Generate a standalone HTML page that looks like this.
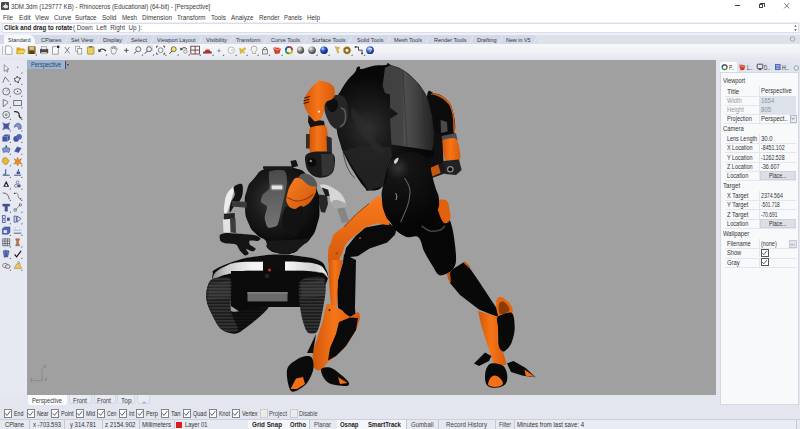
<!DOCTYPE html>
<html><head><meta charset="utf-8"><title>Rhinoceros</title>
<style>
html,body{margin:0;padding:0}
body{width:800px;height:429px;overflow:hidden;background:#fff;position:relative;font-family:"Liberation Sans",sans-serif}
.b{position:absolute}
.t{position:absolute;white-space:pre;line-height:1;transform-origin:0 50%}
svg{position:absolute;left:0;top:0}
</style></head><body>
<div class="b" style="left:0px;top:0px;width:800px;height:22px;background:#ffffff;"></div>
<div class="b" style="left:0px;top:22px;width:800px;height:13px;background:#edf0f6;"></div>
<div class="b" style="left:2px;top:23.2px;width:797px;height:9.8px;background:#ffffff;box-sizing:border-box;border:0.8px solid #d9dee9;"></div>
<div class="b" style="left:0px;top:34.5px;width:800px;height:9.2px;background:#dde1ea;"></div>
<div class="b" style="left:0px;top:35.3px;width:537px;height:8.4px;background:#d3d9e6;border-radius:0 5px 0 0;"></div>
<div class="b" style="left:0px;top:43.5px;width:800px;height:0.6px;background:#c8ceda;"></div>
<div class="b" style="left:0px;top:44px;width:800px;height:16px;background:linear-gradient(#f6f7fa,#eff1f6 55%,#e2e5ec);"></div>
<div class="b" style="left:1.5px;top:46px;width:0.6px;height:9px;background:#b9c0cf;"></div>
<div class="b" style="left:0px;top:60px;width:27px;height:336px;background:#e6e9f1;"></div>
<div class="b" style="left:27px;top:60px;width:689.4px;height:334.8px;background:#a0a0a0;"></div>
<div class="b" style="left:716.4px;top:60px;width:83.6px;height:345px;background:#e3e6ee;"></div>
<div class="b" style="left:719.7px;top:71.5px;width:79.8px;height:333.5px;background:#f8f9fb;box-sizing:border-box;border:0.8px solid #d3d8e3;"></div>
<div class="b" style="left:0px;top:394.8px;width:717px;height:10.5px;background:#e3e6ee;"></div>
<div class="b" style="left:0px;top:405px;width:800px;height:14px;background:#e3e6ee;"></div>
<div class="b" style="left:0px;top:419px;width:800px;height:10px;background:#e6e9f0;border-top:0.8px solid #c9cfdb;box-sizing:border-box;"></div>
<div class="b" style="left:1.3px;top:1.6px;width:7.8px;height:8.2px;background:#4a4a4a;border-radius:0.8px;"></div>
<div class="b" style="left:735.2px;top:5.2px;width:5.2px;height:0.7px;background:#444;"></div>
<div class="b" style="left:759.3px;top:4.2px;width:4.2px;height:4.2px;background:transparent;border:0.7px solid #444;box-sizing:border-box;"></div>
<div class="b" style="left:760.4px;top:3.1px;width:4.2px;height:4.2px;background:transparent;border-top:0.7px solid #444;border-right:0.7px solid #444;box-sizing:border-box;"></div>
<div class="b" style="left:3.5px;top:35.3px;width:31px;height:8.8px;background:#f8f9fc;border-radius:2px 6px 0 0;"></div>
<div class="b" style="left:66px;top:36px;width:0.7px;height:7.5px;background:#e4e8f1;transform:skewX(-25deg);"></div>
<div class="b" style="left:97px;top:36px;width:0.7px;height:7.5px;background:#e4e8f1;transform:skewX(-25deg);"></div>
<div class="b" style="left:126px;top:36px;width:0.7px;height:7.5px;background:#e4e8f1;transform:skewX(-25deg);"></div>
<div class="b" style="left:152px;top:36px;width:0.7px;height:7.5px;background:#e4e8f1;transform:skewX(-25deg);"></div>
<div class="b" style="left:200px;top:36px;width:0.7px;height:7.5px;background:#e4e8f1;transform:skewX(-25deg);"></div>
<div class="b" style="left:231px;top:36px;width:0.7px;height:7.5px;background:#e4e8f1;transform:skewX(-25deg);"></div>
<div class="b" style="left:265px;top:36px;width:0.7px;height:7.5px;background:#e4e8f1;transform:skewX(-25deg);"></div>
<div class="b" style="left:305px;top:36px;width:0.7px;height:7.5px;background:#e4e8f1;transform:skewX(-25deg);"></div>
<div class="b" style="left:350px;top:36px;width:0.7px;height:7.5px;background:#e4e8f1;transform:skewX(-25deg);"></div>
<div class="b" style="left:388px;top:36px;width:0.7px;height:7.5px;background:#e4e8f1;transform:skewX(-25deg);"></div>
<div class="b" style="left:427px;top:36px;width:0.7px;height:7.5px;background:#e4e8f1;transform:skewX(-25deg);"></div>
<div class="b" style="left:471px;top:36px;width:0.7px;height:7.5px;background:#e4e8f1;transform:skewX(-25deg);"></div>
<div class="b" style="left:500px;top:36px;width:0.7px;height:7.5px;background:#e4e8f1;transform:skewX(-25deg);"></div>
<div class="b" style="left:535px;top:36px;width:0.7px;height:7.5px;background:#e4e8f1;transform:skewX(-25deg);"></div>
<div class="b" style="left:27px;top:60px;width:37.8px;height:9.2px;background:#9db4d1;"></div>
<div class="b" style="left:65.1px;top:60.5px;width:0.6px;height:8.5px;background:#3a5070;"></div>
<div class="b" style="left:66.6px;top:64px;width:0;height:0;border-left:1.5px solid transparent;border-right:1.5px solid transparent;border-top:2px solid #333;"></div>
<div class="b" style="left:27.5px;top:394.8px;width:39px;height:10px;background:#fbfcfe;border-radius:0 0 3px 3px;"></div>
<div class="b" style="left:69px;top:394.8px;width:22.7px;height:9.6px;background:#e8ebf3;border-radius:0 0 3px 3px;border:0.5px solid #d3d8e4;border-top:none;box-sizing:border-box;"></div>
<div class="b" style="left:93.5px;top:394.8px;width:22px;height:9.6px;background:#e8ebf3;border-radius:0 0 3px 3px;border:0.5px solid #d3d8e4;border-top:none;box-sizing:border-box;"></div>
<div class="b" style="left:117px;top:394.8px;width:17.6px;height:9.6px;background:#e8ebf3;border-radius:0 0 3px 3px;border:0.5px solid #d3d8e4;border-top:none;box-sizing:border-box;"></div>
<div class="b" style="left:137px;top:394.8px;width:13px;height:9.6px;background:#e8ebf3;border-radius:0 0 3px 3px;border:0.5px solid #d3d8e4;border-top:none;box-sizing:border-box;"></div>
<div class="b" style="left:3.6px;top:409px;width:8.4px;height:8.7px;background:#fff;border:0.7px solid #7c8393;box-sizing:border-box;"></div>
<div class="b" style="left:26.5px;top:409px;width:8.4px;height:8.7px;background:#fff;border:0.7px solid #7c8393;box-sizing:border-box;"></div>
<div class="b" style="left:51px;top:409px;width:8.4px;height:8.7px;background:#fff;border:0.7px solid #7c8393;box-sizing:border-box;"></div>
<div class="b" style="left:75.5px;top:409px;width:8.4px;height:8.7px;background:#fff;border:0.7px solid #7c8393;box-sizing:border-box;"></div>
<div class="b" style="left:97px;top:409px;width:8.4px;height:8.7px;background:#fff;border:0.7px solid #7c8393;box-sizing:border-box;"></div>
<div class="b" style="left:118.5px;top:409px;width:8.4px;height:8.7px;background:#fff;border:0.7px solid #7c8393;box-sizing:border-box;"></div>
<div class="b" style="left:136px;top:409px;width:8.4px;height:8.7px;background:#fff;border:0.7px solid #7c8393;box-sizing:border-box;"></div>
<div class="b" style="left:160.5px;top:409px;width:8.4px;height:8.7px;background:#fff;border:0.7px solid #7c8393;box-sizing:border-box;"></div>
<div class="b" style="left:182.5px;top:409px;width:8.4px;height:8.7px;background:#fff;border:0.7px solid #7c8393;box-sizing:border-box;"></div>
<div class="b" style="left:208.5px;top:409px;width:8.4px;height:8.7px;background:#fff;border:0.7px solid #7c8393;box-sizing:border-box;"></div>
<div class="b" style="left:231.5px;top:409px;width:8.4px;height:8.7px;background:#fff;border:0.7px solid #7c8393;box-sizing:border-box;"></div>
<div class="b" style="left:259.5px;top:409px;width:8.4px;height:8.7px;background:#ebebeb;border:0.6px solid #c8ccd6;box-sizing:border-box;"></div>
<div class="b" style="left:290px;top:409px;width:8.4px;height:8.7px;background:#ebebeb;border:0.6px solid #c8ccd6;box-sizing:border-box;"></div>
<div class="b" style="left:176.3px;top:421.6px;width:6.2px;height:6.4px;background:#d81e1e;"></div>
<div class="b" style="left:28.5px;top:419.5px;width:0.6px;height:9.5px;background:#c3c9d6;"></div>
<div class="b" style="left:64px;top:419.5px;width:0.6px;height:9.5px;background:#c3c9d6;"></div>
<div class="b" style="left:101.5px;top:419.5px;width:0.6px;height:9.5px;background:#c3c9d6;"></div>
<div class="b" style="left:138.5px;top:419.5px;width:0.6px;height:9.5px;background:#c3c9d6;"></div>
<div class="b" style="left:173.5px;top:419.5px;width:0.6px;height:9.5px;background:#c3c9d6;"></div>
<div class="b" style="left:247.5px;top:419.5px;width:0.6px;height:9.5px;background:#c3c9d6;"></div>
<div class="b" style="left:285.5px;top:419.5px;width:0.6px;height:9.5px;background:#c3c9d6;"></div>
<div class="b" style="left:309px;top:419.5px;width:0.6px;height:9.5px;background:#c3c9d6;"></div>
<div class="b" style="left:336.5px;top:419.5px;width:0.6px;height:9.5px;background:#c3c9d6;"></div>
<div class="b" style="left:362.5px;top:419.5px;width:0.6px;height:9.5px;background:#c3c9d6;"></div>
<div class="b" style="left:405.5px;top:419.5px;width:0.6px;height:9.5px;background:#c3c9d6;"></div>
<div class="b" style="left:438px;top:419.5px;width:0.6px;height:9.5px;background:#c3c9d6;"></div>
<div class="b" style="left:494.5px;top:419.5px;width:0.6px;height:9.5px;background:#c3c9d6;"></div>
<div class="b" style="left:248px;top:419.5px;width:37.5px;height:9.5px;background:#f4f6fa;"></div>
<div class="b" style="left:286px;top:419.5px;width:23px;height:9.5px;background:#f4f6fa;"></div>
<div class="b" style="left:337px;top:419.5px;width:25.5px;height:9.5px;background:#f4f6fa;"></div>
<div class="b" style="left:363px;top:419.5px;width:42.5px;height:9.5px;background:#f4f6fa;"></div>
<div class="b" style="left:514px;top:420px;width:283px;height:9px;background:#e9ecf2;border-left:0.6px solid #c3c9d6;border-right:0.6px solid #c3c9d6;box-sizing:border-box;"></div>
<div class="b" style="left:720.3px;top:61.5px;width:17px;height:10.2px;background:#fbfcfe;border-radius:2px 2px 0 0;"></div>
<div class="b" style="left:738px;top:62px;width:17.2px;height:9.4px;background:#dde2ec;border-radius:2px 4px 0 0;"></div>
<div class="b" style="left:756px;top:62px;width:17.4px;height:9.4px;background:#dde2ec;border-radius:2px 4px 0 0;"></div>
<div class="b" style="left:774.2px;top:62px;width:17.4px;height:9.4px;background:#dde2ec;border-radius:2px 4px 0 0;"></div>
<div class="b" style="left:725px;top:95.6px;width:71px;height:0.5px;background:#e3e6ee;"></div>
<div class="b" style="left:758.5px;top:86.4px;width:0.5px;height:9.2px;background:#e3e6ee;"></div>
<div class="b" style="left:725px;top:104.8px;width:71px;height:0.5px;background:#e3e6ee;"></div>
<div class="b" style="left:758.5px;top:95.60000000000001px;width:0.5px;height:9.2px;background:#e3e6ee;"></div>
<div class="b" style="left:759px;top:95.8px;width:37px;height:8.8px;background:#dde1ea;"></div>
<div class="b" style="left:725px;top:114.1px;width:71px;height:0.5px;background:#e3e6ee;"></div>
<div class="b" style="left:758.5px;top:104.9px;width:0.5px;height:9.2px;background:#e3e6ee;"></div>
<div class="b" style="left:759px;top:105.1px;width:37px;height:8.8px;background:#dde1ea;"></div>
<div class="b" style="left:725px;top:123.1px;width:71px;height:0.5px;background:#e3e6ee;"></div>
<div class="b" style="left:758.5px;top:113.9px;width:0.5px;height:9.2px;background:#e3e6ee;"></div>
<div class="b" style="left:789.5px;top:114.5px;width:7px;height:8px;background:#e8ebf1;border:0.5px solid #b4bac8;box-sizing:border-box;"></div>
<div class="b" style="left:725px;top:143.0px;width:71px;height:0.5px;background:#e3e6ee;"></div>
<div class="b" style="left:758.5px;top:133.8px;width:0.5px;height:9.2px;background:#e3e6ee;"></div>
<div class="b" style="left:725px;top:152.4px;width:71px;height:0.5px;background:#e3e6ee;"></div>
<div class="b" style="left:758.5px;top:143.20000000000002px;width:0.5px;height:9.2px;background:#e3e6ee;"></div>
<div class="b" style="left:725px;top:161.7px;width:71px;height:0.5px;background:#e3e6ee;"></div>
<div class="b" style="left:758.5px;top:152.5px;width:0.5px;height:9.2px;background:#e3e6ee;"></div>
<div class="b" style="left:725px;top:171.0px;width:71px;height:0.5px;background:#e3e6ee;"></div>
<div class="b" style="left:758.5px;top:161.8px;width:0.5px;height:9.2px;background:#e3e6ee;"></div>
<div class="b" style="left:725px;top:180.2px;width:71px;height:0.5px;background:#e3e6ee;"></div>
<div class="b" style="left:758.5px;top:171.0px;width:0.5px;height:9.2px;background:#e3e6ee;"></div>
<div class="b" style="left:759.5px;top:171.4px;width:36.5px;height:8.4px;background:#dcdfe5;border:0.5px solid #ced2da;box-sizing:border-box;"></div>
<div class="b" style="left:725px;top:199.9px;width:71px;height:0.5px;background:#e3e6ee;"></div>
<div class="b" style="left:758.5px;top:190.70000000000002px;width:0.5px;height:9.2px;background:#e3e6ee;"></div>
<div class="b" style="left:725px;top:209.4px;width:71px;height:0.5px;background:#e3e6ee;"></div>
<div class="b" style="left:758.5px;top:200.20000000000002px;width:0.5px;height:9.2px;background:#e3e6ee;"></div>
<div class="b" style="left:725px;top:218.79999999999998px;width:71px;height:0.5px;background:#e3e6ee;"></div>
<div class="b" style="left:758.5px;top:209.6px;width:0.5px;height:9.2px;background:#e3e6ee;"></div>
<div class="b" style="left:725px;top:228.0px;width:71px;height:0.5px;background:#e3e6ee;"></div>
<div class="b" style="left:758.5px;top:218.8px;width:0.5px;height:9.2px;background:#e3e6ee;"></div>
<div class="b" style="left:759.5px;top:219.20000000000002px;width:36.5px;height:8.4px;background:#dcdfe5;border:0.5px solid #ced2da;box-sizing:border-box;"></div>
<div class="b" style="left:725px;top:248.1px;width:71px;height:0.5px;background:#e3e6ee;"></div>
<div class="b" style="left:758.5px;top:238.9px;width:0.5px;height:9.2px;background:#e3e6ee;"></div>
<div class="b" style="left:789px;top:239.5px;width:7.5px;height:8px;background:#e1e4ea;border:0.5px solid #c4c9d4;box-sizing:border-box;"></div>
<div class="b" style="left:725px;top:257.5px;width:71px;height:0.5px;background:#e3e6ee;"></div>
<div class="b" style="left:758.5px;top:248.3px;width:0.5px;height:9.2px;background:#e3e6ee;"></div>
<div class="b" style="left:760.5px;top:248.9px;width:8px;height:8px;background:#fff;border:0.7px solid #555;box-sizing:border-box;"></div>
<div class="b" style="left:725px;top:266.70000000000005px;width:71px;height:0.5px;background:#e3e6ee;"></div>
<div class="b" style="left:758.5px;top:257.5px;width:0.5px;height:9.2px;background:#e3e6ee;"></div>
<div class="b" style="left:760.5px;top:258.1px;width:8px;height:8px;background:#fff;border:0.7px solid #555;box-sizing:border-box;"></div>
<svg width="800" height="429" viewBox="0 0 800 429">
<defs>
<clipPath id="vp"><rect x="27" y="60" width="689.4" height="334.8"/></clipPath>
<radialGradient id="gBody" gradientUnits="userSpaceOnUse" cx="368" cy="128" r="52"><stop offset="0" stop-color="#303030"/><stop offset="0.45" stop-color="#1a1a1a"/><stop offset="1" stop-color="#080808"/></radialGradient>
<linearGradient id="gPanel" gradientUnits="userSpaceOnUse" x1="383" y1="0" x2="434" y2="0"><stop offset="0" stop-color="#404040"/><stop offset="0.38" stop-color="#434343"/><stop offset="0.42" stop-color="#4e4e4e"/><stop offset="0.62" stop-color="#444"/><stop offset="0.8" stop-color="#343434"/><stop offset="1" stop-color="#222"/></linearGradient>
<radialGradient id="gPelvis" gradientUnits="userSpaceOnUse" cx="398" cy="168" r="60"><stop offset="0" stop-color="#333"/><stop offset="0.2" stop-color="#141414"/><stop offset="1" stop-color="#050505"/></radialGradient>
<linearGradient id="gOr" x1="0" y1="0" x2="1" y2="0"><stop offset="0" stop-color="#cf560a"/><stop offset="0.45" stop-color="#f67518"/><stop offset="1" stop-color="#d65b0c"/></linearGradient>
<linearGradient id="gOrV" x1="0" y1="0" x2="0" y2="1"><stop offset="0" stop-color="#f97b1d"/><stop offset="1" stop-color="#d55a0c"/></linearGradient>
<linearGradient id="gOrD" x1="0" y1="0" x2="1" y2="1"><stop offset="0" stop-color="#fa8124"/><stop offset="1" stop-color="#cc540a"/></linearGradient>
<radialGradient id="gSmall" gradientUnits="userSpaceOnUse" cx="276" cy="200" r="44"><stop offset="0" stop-color="#3a3a3a"/><stop offset="0.55" stop-color="#1b1b1b"/><stop offset="1" stop-color="#0a0a0a"/></radialGradient>
<linearGradient id="gWhite" x1="0" y1="0" x2="1" y2="1"><stop offset="0" stop-color="#f6f6f6"/><stop offset="1" stop-color="#a4a4a4"/></linearGradient>
<linearGradient id="gTank" gradientUnits="userSpaceOnUse" x1="212" y1="0" x2="328" y2="0"><stop offset="0" stop-color="#8a8a8a"/><stop offset="0.12" stop-color="#c9c9c9"/><stop offset="0.35" stop-color="#f4f4f4"/><stop offset="0.65" stop-color="#f4f4f4"/><stop offset="0.88" stop-color="#d0d0d0"/><stop offset="1" stop-color="#eee"/></linearGradient>
<linearGradient id="gBand" x1="0" y1="0" x2="0" y2="1"><stop offset="0" stop-color="#4c4c4c"/><stop offset="0.45" stop-color="#626262"/><stop offset="1" stop-color="#787878"/></linearGradient>
<pattern id="trk" width="4" height="3.2" patternUnits="userSpaceOnUse"><rect width="4" height="3.2" fill="#191919"/><rect y="0" width="4" height="1.7" fill="#343434"/></pattern>
<pattern id="trk2" width="4" height="3.2" patternUnits="userSpaceOnUse"><rect width="4" height="3.2" fill="#0c0c0c"/><rect y="0" width="4" height="1.3" fill="#161616"/></pattern>
</defs>
<g clip-path="url(#vp)">
<g>
<path d="M212.8,274 C213.4,271.4 210.4,272.1 216,269 C221.6,265.9 227.2,263.5 237,260.5 C246.8,257.5 248.2,257.7 258,256.3 C267.8,254.9 269.2,254.5 279,254.5 C288.8,254.5 290.7,254.9 300,256.3 C309.3,257.7 312.9,257.5 319,260.5 C325.1,263.5 323.9,264.9 326,269 C328.1,273.1 328.7,277.1 328,278 C327.3,278.9 327.7,274.6 323,273 C318.3,271.4 316.9,271.7 308,271 C299.1,270.3 295.5,270.2 285,270 C274.5,269.8 272.8,269.8 263,270 C253.2,270.2 252.6,269.7 243,271 C233.4,272.3 228.9,273.4 222,275.5 C215.1,277.6 215.6,280.4 213.5,280 C211.4,279.6 212.2,276.6 212.8,274Z" fill="#0d0d0d" />
<path d="M213.5,280.5 L222,275.5 L243,271 L308,271 L323,273 L328,278 L326,284 L300,282 L231,282 L214,284Z" fill="#0b0b0b" />
<path d="M213,277 C213.6,275.2 213.9,273.7 216.5,271.5 C219.1,269.3 221.9,267.8 226,266 C230.1,264.2 230.6,263.3 237,262.5 C243.4,261.7 249.6,262 258,261.8 C266.4,261.6 270.6,261.6 279,261.6 C287.4,261.6 292.2,261.4 300,262 C307.8,262.6 313,262.8 318,264.5 C323,266.2 323,267.8 325,270.5 C327,273.2 328.4,277.5 328,278 C327.6,278.5 327,274.4 323,273 C319,271.6 315.6,271.6 308,271 C300.4,270.4 294,270.2 285,270 C276,269.8 271.4,269.8 263,270 C254.6,270.2 251.2,269.9 243,271 C234.8,272.1 227.9,273.6 222,275.5 C216.1,277.4 215.3,280.2 213.5,280.5 C211.7,280.8 212.4,278.8 213,277Z" fill="url(#gTank)" />
<path d="M263,258 L285,258 L285,271 L263,271Z" fill="#0e0e0e" />
<path d="M231,271 L301,271 L301,307 L268,307 L262,312 L240,312 L231,306Z" fill="#0b0b0b" />
<rect x="247.5" y="292" width="40" height="9.4" fill="#6b6b6b"/><rect x="247.5" y="292" width="40" height="2" fill="#7c7c7c"/>
<circle cx="269.5" cy="270" r="1.5" fill="#d82525"/><circle cx="267" cy="276" r="2.2" fill="#2c2222"/>
<path d="M206.5,292 C206.8,288.9 208.4,283.4 209.7,281.5 C211,279.6 213.2,278.3 216,278 C218.8,277.7 228.7,275 230.7,279.4 C232.7,283.8 226,307.4 231,311 C236,314.6 267.3,303.9 268.5,306.7 C269.7,309.5 245.6,328.6 240,332 C234.4,335.4 229.4,332.9 226.5,332 C223.6,331.1 220.5,329.3 218,325.6 C215.5,321.9 209.1,309.1 207.6,304.6 C206.1,300.1 206.2,295.1 206.5,292Z" fill="url(#trk2)" />
<path d="M206.5,292 C206.8,288.9 208.4,283.4 209.7,281.5 C211,279.6 213.2,278.3 216,278 C218.8,277.7 228.7,275 230.7,279.4 C232.7,283.8 230,304.3 231,311 C232,317.7 238.6,327.2 238,330 C237.4,332.8 229.2,332.6 226.5,332 C223.8,331.4 220.5,329.3 218,325.6 C215.5,321.9 209.1,309.1 207.6,304.6 C206.1,300.1 206.2,295.1 206.5,292Z" fill="url(#trk)" />
<path d="M300,281.5 C302.9,276.7 319.6,275.9 323,277.3 C326.4,278.7 325.8,286.4 325.5,292 C325.2,297.6 322.2,313.7 321,319 C319.8,324.3 318.5,330.3 316.7,332 C314.9,333.7 309.4,334.5 307.3,332 C305.2,329.5 302,319.7 301,313 C300,306.3 297.1,286.3 300,281.5Z" fill="url(#trk)" />
<path d="M209,284 L229.5,281 L230.5,298 L208,300Z" fill="#6a6a6a" opacity="0.22"/>
<path d="M301,283 L324,279.5 L325,296 L301.5,298Z" fill="#6a6a6a" opacity="0.22"/>
<path d="M264.7,169 C256.9,172.3 259.3,172.3 254,178.6 C248.7,184.9 249.7,181.6 247,190 C244.3,198.4 244.6,196.7 245,206.6 C245.4,216.5 244.9,214.6 248.4,223 C251.9,231.4 251.3,229.1 256.6,234.5 C261.9,239.9 262.6,236.8 266,241 C269.4,245.2 263.8,244.8 268,248.5 C272.2,252.2 272.2,252.3 280,253.5 C287.8,254.7 287.7,254.8 294,252.5 C300.3,250.2 296.2,250.1 301,246 C305.8,241.9 305.2,245.3 310,239 C314.8,232.7 314.1,234.7 317,225 C319.9,215.3 319.5,217.1 319.5,206.6 C319.5,196.1 320.4,199.2 317,190 C313.6,180.8 314.3,182.4 308,176 C301.7,169.6 304.4,171.1 296,168.5 C287.6,165.9 289.4,167.3 280,167.5 C270.6,167.7 272.5,165.7 264.7,169Z" fill="url(#gSmall)" />
<path d="M266,241 L310,239 L301,247 L294,253 L280,254 L268,249Z" fill="#181818" />
<rect x="263" y="166.3" width="30" height="2.6" rx="0.8" fill="#1a1a1a"/>
<path d="M290.5,161 L296,160 L298.2,166 L292,167.7Z" fill="#141414" />
<path d="M269.4,171.6 C270.9,169.8 282.7,169.4 284.5,170.5 C286.3,171.6 287.2,179.4 287,183 C286.8,186.6 282.9,202.4 282,206.6 C281.1,210.8 278.9,222.9 277.5,225 C276.1,227.1 269.3,228.2 268,227.5 C266.7,226.8 264.8,220.1 264.7,218 C264.6,215.9 267.4,208.2 267,206.6 C266.6,205 261.5,203.2 261,202 C260.5,200.8 261.6,196.4 262.4,195 C263.2,193.6 268.7,190.3 269.4,188 C270.1,185.7 267.9,173.3 269.4,171.6Z" fill="url(#gBand)" opacity="0.95"/>
<rect x="271.7" y="185.4" width="10.5" height="3.8" rx="1" fill="#f2f2f2"/>
<rect x="270.5" y="184.2" width="13" height="6.2" rx="2" fill="#cfcfcf" opacity="0.35"/>
<path d="M226.9,193.8 C228.1,191.7 230.5,189.1 231.8,187.9 C233.1,186.8 234.6,185.8 234.8,186.9 C235,188.1 233.6,191.8 232.8,194.8 C232,197.8 231,201.5 229.8,204.8 C228.7,208.1 226.9,213.7 225.9,214.7 C224.9,215.7 224.1,213 223.9,210.7 C223.7,208.4 224.4,203.6 224.9,200.8 C225.4,198 225.8,196 226.9,193.8Z" fill="#ececec" />
<path d="M233.8,186.9 C235,185.1 240.2,182.9 241.7,183.9 C243.2,184.9 243,190.1 242.7,192.9 C242.4,195.7 241.3,198.5 239.8,200.8 C238.3,203.1 235.5,204.7 233.8,206.7 C232.1,208.7 230.3,213.3 229.8,212.7 C229.3,212 230,205.8 230.8,202.8 C231.6,199.8 234.3,197.5 234.8,194.8 C235.3,192.2 232.7,188.7 233.8,186.9Z" fill="#121212" />
<path d="M231.8,200.8 L246.7,202 L246.7,207.7 L231.8,206.5Z" fill="#3a3a3a" />
<path d="M223.9,213.7 L234.8,213 L234.8,219.6 L223.9,220Z" fill="#242424" />
<path d="M222.9,219.6 L232.8,218.7 L233.4,232.5 L223.5,232.5Z" fill="#e2e2e2" />
<path d="M230,219 L235.5,218.5 L236,233 L230.5,232.5Z" fill="#3c3c3c" />
<path d="M219.9,235 C220.5,234.1 224.1,233.2 226,233 C227.9,232.8 233,233.3 235.8,233.5 C238.6,233.7 247.3,234.3 249.7,234.5 C252.1,234.7 254.7,235 256,235.5 C257.3,236 260.4,237.9 260.6,238.5 C260.8,239.1 259.2,240.8 258,241 C256.8,241.2 251,240.1 250,240.5 C249,240.9 249,243.5 249.7,244.4 C250.4,245.3 255.2,247.7 255.6,248.5 C256,249.3 254.1,251.3 253,251.4 C251.9,251.5 246.5,248.8 246,249 C245.5,249.2 248.8,252.8 248.7,253.5 C248.6,254.2 246,255.8 245,255.4 C244,255 240.9,251.7 239.8,250.4 C238.8,249.1 237.6,245.3 236,244.5 C234.4,243.7 227.8,243.9 226,243.5 C224.2,243.1 221.2,242 220.5,241 C219.8,240 219.3,235.9 219.9,235Z" fill="#141414" />
<path d="M320.5,184.8 C321.6,184.3 325.3,184.5 328.2,185.5 C331.1,186.5 335.4,189 338,191 C340.6,193 342.2,195.1 343.5,197.3 C344.8,199.5 345.7,202.4 345.6,204.3 C345.5,206.2 344.4,207.9 342.8,208.5 C341.2,209.1 337.8,208.7 335.8,207.8 C333.8,206.9 332,205 331,203 C330,201 330.3,198.1 329.6,196 C328.9,193.9 328.1,191.7 326.8,190.4 C325.5,189.1 322.9,189.2 321.9,188.3 C320.8,187.4 319.4,185.3 320.5,184.8Z" fill="#d6d6d6" />
<path d="M331,203 C330.9,201.7 333.3,200.3 335,200 C336.7,199.7 339.2,200.3 341,201 C342.8,201.7 345.3,203.1 345.6,204.3 C345.9,205.6 344.4,207.9 342.8,208.5 C341.2,209.1 337.8,208.7 335.8,207.8 C333.8,206.9 331.1,204.3 331,203Z" fill="#a8a8a8" />
<path d="M321.9,187.6 L328.2,189.7 L329.6,196 L325.4,196Z" fill="#1a1a1a" />
<path d="M319,194.6 L327,195.5 L328,204 L325,212.7 L321,212 L319,204Z" fill="#262626" />
<path d="M337.2,208.5 L344.5,207.5 L349,221 L342,223.5Z" fill="#858585" />
</g>
<g>
<path d="M427,96 C428.4,86.3 430.3,92.6 435,93.5 C439.7,94.4 442.8,95.7 447,100 C451.2,104.3 451.1,104.8 453,112 C454.9,119.2 455.7,125.2 455,131 C454.3,136.8 453.5,134.7 450,137 C446.5,139.3 444.9,141.5 440,141 C435.1,140.5 432,145.5 429,135 C426,124.5 425.6,105.7 427,96Z" fill="#0c0c0c" />
<path d="M431,94.8 C430.9,94.4 431.3,92.3 435,93.5 C438.7,94.7 442.8,95.7 447,100 C451.2,104.3 451.1,104.8 453,112 C454.9,119.2 454.9,126.3 455,131 C455.1,135.7 454.3,136.2 453.6,132 C452.9,127.8 453.8,120.1 452,113 C450.2,105.9 449.9,105.7 446,101.6 C442.1,97.5 439,96.9 435.5,95.3 C432,93.7 431.1,95.2 431,94.8Z" fill="#d85c0e" />
<path d="M440.6,120 L447,122 L447.6,131.6 L441,133Z" fill="#4a4a4a" />
<path d="M441.5,136 L456,133 L457.5,140 L442.5,143Z" fill="#4e4e4e" />
<path d="M442,142 C442.4,139 447,138.8 449,138.5 C451,138.2 455.5,137.3 457,140 C458.5,142.7 461.5,156.2 460,159 C458.5,161.8 448.4,163.3 446,161 C443.6,158.7 441.6,145 442,142Z" fill="url(#gOr)" />
<path d="M443,161 L459,159.5 L461.6,170 L456,175 L445,174Z" fill="#222" />
<circle cx="450.3" cy="169.3" r="3.3" fill="#8a8a8a"/><circle cx="450.3" cy="169.3" r="2" fill="#0c0c0c"/>
<path d="M425,163 L443,160.5 L446,173 L432,178Z" fill="#1a1a1a" />
<path d="M428,166 L438,163.5 L440.6,173 L431,177Z" fill="#c4560f" />
<path d="M430,128 L440,134 L442.5,143 L443.5,162 L430,168Z" fill="#101010" />
<path d="M400,231 C397,236.3 414,233.7 418,237 C422,240.3 421.7,246.3 424,251 C426.3,255.7 429.5,261 432,265 C434.5,269 436.3,273.7 439,275 C441.7,276.3 445.7,274 448,273 C450.3,272 451.7,271 453,269 C454.3,267 455.7,265 456,261 C456.3,257 455.7,250.7 455,245 C454.3,239.3 453.5,232.5 452,227 C450.5,221.5 448.7,215.7 446,212 C443.3,208.3 443.7,201.8 436,205 C428.3,208.2 403,225.7 400,231Z" fill="#070707" />
<path d="M453,269 L464,262 L469,267 L480,283 L499,312 L497.6,317 L479,309.6 L460,295 L450,283 L449,274Z" fill="#080808" />
<path d="M447,274 L450,272 L451,283 L448,279Z" fill="#c8540c" />
<path d="M463,262.5 L465,261.5 L470.5,267 L469,268Z" fill="#c8540c" />
<path d="M436,203 C435.6,199.2 438.7,199.8 440.5,199.5 C442.3,199.2 445.5,199.4 447,201 C448.5,202.6 449,205.8 449.5,209 C450,212.2 451.1,217.8 450,220 C448.9,222.2 445.3,224.8 443,222 C440.7,219.2 436.4,206.8 436,203Z" fill="#e0600e" />
<path d="M496.3,301 C496.6,297.8 498.8,296.6 501,297 C503.2,297.4 507.9,301 509.8,303.5 C511.7,306 514.1,309.9 512.3,312 C510.5,314.1 501.7,317.8 499,316 C496.3,314.2 496,304.2 496.3,301Z" fill="#e4660f" />
<path d="M499,304 C499.5,301.9 501.5,301.2 503,301.5 C504.5,301.8 507,304.4 508,306 C509,307.6 510.3,309.7 509,311 C507.7,312.3 501.7,315.2 500,314 C498.3,312.8 498.5,306.1 499,304Z" fill="#8c3a08" />
<path d="M478,311 L498.8,317 L497.6,339 L503.7,353.7 L506.5,364 L497.6,368.5 L492.7,361 L487.8,346 L481.6,326.7Z" fill="url(#gOr)" />
<path d="M497.6,317 C499.5,315.2 509.7,311.4 512,313 C514.3,314.6 514.8,324.9 514.7,329 C514.6,333.1 512.5,341 511,344 C509.5,347 505.3,351.2 503.7,351.5 C502.1,351.8 499.6,349.3 498.8,346 C498,342.7 498.2,330.6 498,326.7 C497.8,322.8 495.7,318.8 497.6,317Z" fill="#090909" />
<path d="M474,363.5 L485,352.5 L491.4,356 L489,361 L479,366Z" fill="#090909" />
<path d="M487.8,366 C485.6,368.9 484.8,373.9 485,378 C485.2,382.1 485.8,385 489,386.7 C492.2,388.4 497.4,387.9 501,386.7 C504.6,385.5 506.2,384.3 507,380.6 C507.8,376.9 507.2,371.4 505,368 C502.8,364.6 499.4,363.9 496,363.5 C492.6,363.1 490,363.1 487.8,366Z" fill="#090909" />
<path d="M488.5,382 C489.4,379.5 491.2,375.6 494.5,375.5 C497.8,375.4 501.3,379 502.5,381.5 C503.7,384 502.3,385.2 499.5,386.3 C496.7,387.4 493.1,387.3 490.5,386.3 C487.9,385.3 487.6,384.5 488.5,382Z" fill="#f46f15" />
<path d="M507,363.5 L513.5,361 L525.7,368 L535.5,377.3 L523,375.7 L511,372Z" fill="#0a0a0a" />
<path d="M524.5,369.6 L535,377 L525.7,375.7Z" fill="#f46f15" />
<path d="M355.6,236 L365.5,227.6 L389.3,223 L396.2,229 L395.2,234.5 L387.3,242.4 L369.5,248.6 L357.6,256.3 L344,257.5 L346,248Z" fill="#0a0a0a" />
<circle cx="360" cy="238" r="1" fill="#e03030"/>
<path d="M379.4,196 C381.2,196.7 384.1,205.5 385.3,208.8 C386.5,212.1 390.2,222.9 389.3,224.6 C388.4,226.3 380.2,223.2 377.4,223.6 C374.6,223.9 368.3,226.1 365.5,227.6 C362.7,229.1 356,234.5 353.7,236.5 C351.4,238.5 347.1,242.4 345.7,244.4 C344.3,246.4 343,251.9 342,254 C341,256.1 338.6,261.1 337,262 C335.4,262.9 329.5,263.6 328.5,262 C327.5,260.4 328.2,250.2 328.5,248 C328.8,245.8 330.3,244.6 330.9,243 C331.5,241.4 332.4,236.4 333.9,234.5 C335.4,232.6 341.3,228.9 343.8,226.6 C346.3,224.3 352.6,217.5 355.6,214.7 C358.6,211.9 366.7,205.2 369.5,203 C372.3,200.8 377.6,195.3 379.4,196Z" fill="url(#gOrV)" />
<path d="M369,203.5 C366.8,205.4 359.8,211 355.6,214.9 C351.4,218.8 345.9,224.8 344,226.8" fill="none" stroke="#3a1a06" stroke-width="0.8" opacity="0.7"/>
<circle cx="336.8" cy="253.3" r="1.3" fill="#b04808"/>
<path d="M344,254 L356,260 L355,306 L352,316 L338,308 L337,290 L338,280 L343,262Z" fill="#0a0a0a" />
<path d="M328.5,260 L343,260 L338,280 L337,306 L331,306 L329,282Z" fill="url(#gOr)" />
<path d="M340,300 L354,300 L356,318 L345,318Z" fill="#0a0a0a" />
<path d="M327,304 C328.5,302.8 335.7,306.8 338,308 C340.3,309.2 348,316.1 350,316.5 C352,316.9 357,311.9 358,312 C359,312.1 360.2,316.2 360,318 C359.8,319.8 357.4,327.2 356,330 C354.6,332.8 348,343.4 346,346 C344,348.6 337.8,354.4 336,356 C334.2,357.6 329.3,360.8 328,362 C326.7,363.2 324,367.6 323,368.5 C322,369.4 319,370.8 318,370.5 C317,370.2 313.5,367.9 313,366 C312.5,364.1 312.5,355 313,352 C313.5,349 317,339.2 318,336 C319,332.8 322.1,323.2 323,320 C323.9,316.8 325.5,305.2 327,304Z" fill="url(#gOr)" />
<path d="M339,322 L350,317.5 L358,318 L356,330 L346,346 L336,356 L328,360.5 L330,348 L336,334Z" fill="#0a0a0a" />
<path d="M316,334 L307,353 L313,353Z" fill="#0d0d0d" />
<circle cx="329.5" cy="310" r="1" fill="#3a1a05"/>
<path d="M287,370 C287.8,364.8 292.8,362.3 296,360 C299.2,357.7 303.3,356.3 306,356 C308.7,355.7 310.8,356 312,358 C313.2,360 313.8,364.7 313.5,368 C313.2,371.3 311.6,375 310,378 C308.4,381 307.2,383.8 304,386 C300.8,388.2 293.8,393.7 291,391 C288.2,388.3 286.2,375.2 287,370Z" fill="#0a0a0a" />
<path d="M290.5,389 L296,378.5 L303,377 L305,384 L297,389Z" fill="#f26e14" />
<path d="M321,370 C321.3,367.5 326.8,366.8 330,367.5 C333.2,368.2 336.9,371.6 340,374 C343.1,376.4 347.5,380 348.5,382 C349.5,384 349.4,385.9 346,386 C342.6,386.1 332.2,385.2 328,382.5 C323.8,379.8 320.7,372.5 321,370Z" fill="#0a0a0a" />
<path d="M338,377 L347.5,383 L340,384Z" fill="#f26e14" />
<path d="M395,157 C401.1,152.7 403.2,151.6 412,150 C420.8,148.4 422.9,145.7 428,151 C433.1,156.3 429.1,160.7 431,170 C432.9,179.3 432.9,178 435,186 C437.1,194 438.7,192.5 439,200 C439.3,207.5 438.9,206.5 436,214 C433.1,221.5 433.9,222 428,228 C422.1,234 421.5,235 414,236.5 C406.5,238 406.4,237.4 400,233.5 C393.6,229.6 394,227.2 390,222 C386,216.8 387.1,219.9 385,214 C382.9,208.1 382.5,207.5 382,200 C381.5,192.5 381.1,195.1 383,186 C384.9,176.9 385.8,173.7 389,166 C392.2,158.3 388.9,161.3 395,157Z" fill="url(#gPelvis)" />
<path d="M394,162 C394,160.7 394.8,159.7 396,158.8 C397.2,157.9 398.5,157.2 398.5,158.5 C398.5,159.8 397.2,162.6 396,163.5 C394.8,164.4 394,163.3 394,162Z" fill="#e8e8e8" opacity="0.9"/>
<path d="M404.5,178 C405.2,179.2 407.6,182.7 408.5,185 C409.4,187.3 410.1,188.6 410,192 C409.9,195.4 409.2,200.6 407.6,205.6 C406,210.6 401.8,219.3 400.6,222" fill="none" stroke="#707070" stroke-width="1.1" opacity="0.85"/>
<path d="M395.5,193 C395.7,193.5 396.7,194.8 396.8,196 C396.9,197.2 396.1,199.3 396,200" fill="none" stroke="#d8d8d8" stroke-width="0.9" opacity="0.8"/>
<path d="M421.6,226 C423,226.8 426.9,230.3 430,231 C433.1,231.7 437.5,230.8 440,230 C442.5,229.2 444.2,226.7 445,226" fill="none" stroke="#4a4a4a" stroke-width="1.6" opacity="0.9"/>
<path d="M355,72 C357.5,68.6 355.8,68.8 357,67.5 C358.2,66.2 358.9,66.6 360,67 C361.1,67.4 357.8,69.3 361.5,69 C365.2,68.7 369,66.6 375,65.6 C381,64.6 382.2,65.7 385.5,65 C388.8,64.3 386.6,63 388,63 C389.4,63 387.2,63.2 391,65 C394.8,66.8 397,66.2 403,70 C409,73.8 410,75 415,80 C420,85 419.8,85 423,90 C426.2,95 425.8,93.5 428,100 C430.2,106.5 430.5,108 432,116 C433.5,124 433.6,124.5 434,132 C434.4,139.5 434.2,139.5 433.5,146 C432.8,152.5 436.4,156.5 431,158 C425.6,159.5 421,152 412,152 C403,152 400.8,154.5 395,158 C389.2,161.5 392,159 389,166 C386,173 388.1,179.9 383,186 C377.9,192.1 373,190 368.5,190.5 C364,191 368.4,192.1 365,188 C361.6,183.9 360,182 355,174 C350,166 348.8,163.8 345,156 C341.2,148.2 342.1,150 340,143 C337.9,136 337.5,135.8 336.5,128 C335.5,120.2 335.6,120 336,112 C336.4,104 337,101 338,96 C339,91 337.8,95.8 340,92 C342.2,88.2 343.2,86 347,81 C350.8,76 352.5,75.4 355,72Z" fill="url(#gBody)" />
<path d="M343,151 L346.6,156 L355,171 L363.4,182.5 L367.6,189.5 L369,190.5 L383,186 L387.4,167 L392,156 L391,147 L360,146Z" fill="#262626" opacity="0.85"/>
<path d="M385,67.7 L391,65 L403,70 L415,80 L423,90 L428,100 L432,116 L434,132 L433.5,146 L431.5,150.5 L427,149.7 L391.5,144.6 L390,119 L398,113.8 L390,107.4 L390,94.6 L385,93 L382.6,85.6Z" fill="url(#gPanel)" />
<path d="M352,108 C353.6,107.2 357.6,112 362,118 C366.4,124 369.6,131.6 374,138 C378.4,144.4 383.2,147.2 384,150 C384.8,152.8 381.6,154 378,152 C374.4,150 370.8,146 366,140 C361.2,134 356.8,128.4 354,122 C351.2,115.6 350.4,108.8 352,108Z" fill="#2e2e2e" opacity="0.55"/>
<path d="M403,70.5 L407,146 M422.5,90 L426.5,149" stroke="#2a2a2a" stroke-width="0.5" fill="none"/>
<path d="M343,152 C343.5,154 344.7,160.3 346,164 C347.3,167.7 349.5,171.7 351,174 C352.5,176.3 354.3,177.3 355,178" fill="none" stroke="#1a1a1a" stroke-width="0.6"/>
<path d="M325,100 C327.2,95.4 333.8,95 338,95 C342.2,95 344,96.6 346,100 C348,103.4 347.8,108 348,112 C348.2,116 349.2,116.6 347,120 C344.8,123.4 341,129.4 337,129 C333,128.6 329.4,123.8 327,118 C324.6,112.2 322.8,104.6 325,100Z" fill="#262626" />
<path d="M327,101 C328.4,99 332.8,98 335,99 C337.2,100 338.4,103.4 338,106 C337.6,108.6 335,111.4 333,112 C331,112.6 329.2,111.2 328,109 C326.8,106.8 325.6,103 327,101Z" fill="#0d0d0d" />
<path d="M341,108 C341.7,108.5 344.3,108.7 345,111 C345.7,113.3 345.8,119.3 345,122 C344.2,124.7 340.8,126.2 340,127" fill="none" stroke="#5a5a5a" stroke-width="1.6"/>
<path d="M320.7,80.8 C324.4,81.1 328.4,82.2 331.7,84.8 C335,87.4 334.4,88.8 334.7,92 C335,95.2 335.1,95.7 333,98.3 C330.9,100.9 327.7,99.9 325.6,103 C323.5,106.1 325.3,107.7 323.9,111.7 C322.5,115.7 321.7,118 319.5,120.3 C317.3,122.6 317.2,123 314.6,121.5 C312,120 310.9,117.7 308.5,114 C306.1,110.3 305.2,109.3 304.3,105.6 C303.4,101.9 303.5,102 304.8,98.3 C306.1,94.6 307.1,93.1 309.7,89.7 C312.3,86.3 313.2,85.7 315.8,83.6 C318.4,81.5 317,80.5 320.7,80.8Z" fill="url(#gOr)" />
<path d="M304.2,98 l5.5,-1.5 M303.7,100.7 l5.5,-1.5 M303.6,103.4 l5.5,-1.5" stroke="#2a1204" stroke-width="1" fill="none"/>
<circle cx="319" cy="111.6" r="1.1" fill="#fff0dd"/>
<path d="M308.5,115 L314.6,121.5 L319.5,120.3 L324,121 L325,127 L311,129 L308,122Z" fill="#1a120c" />
<path d="M310.2,127.7 C311.8,126.2 323.8,124.4 325.6,125.5 C327.4,126.6 327.9,135.9 328,138.7 C328.1,141.5 328.5,151.9 326.8,153.4 C325.1,154.9 312.7,154.6 310.9,153.4 C309.1,152.2 309.3,143.6 309.2,141 C309.1,138.4 308.6,129.2 310.2,127.7Z" fill="url(#gOr)" />
<path d="M326.5,136 L331.7,138 L332,156 L327,154Z" fill="#2a2a2a" />
<path d="M306,134 L309.7,134 L309.7,148.5 L306,148.5Z" fill="#3c2a1c" />
<path d="M307,154 C309.9,151.7 314.8,151.5 320,151.5 C325.2,151.5 330.1,151.1 333,154 C335.9,156.9 335.1,161.8 334.5,166 C333.9,170.2 333.3,172.7 330,175 C326.7,177.3 322.2,178.1 318,177.5 C313.8,176.9 311.5,174.9 309,172 C306.5,169.1 305.9,166.6 305.5,163 C305.1,159.4 304.1,156.3 307,154Z" fill="#1a1a1a" />
<circle cx="312" cy="162.5" r="4.6" fill="#0a0a0a"/><circle cx="310.8" cy="161" r="1.2" fill="#8a8a8a"/>
<path d="M321,154 L333,154 L334.5,166 L330,175 L322,176Z" fill="#343434" />
<path d="M298.5,177.5 C298.5,176.2 301.1,173.9 303,173.5 C304.9,173.1 307.8,173.8 310,175 C312.2,176.2 314.9,178.8 316,181 C317.1,183.2 317.6,187.2 316.5,188 C315.4,188.8 311.6,187.2 309.3,186 C307.1,184.8 304.8,182.4 303,181 C301.2,179.6 298.5,178.8 298.5,177.5Z" fill="#585858" />
<path d="M298.2,177.7 C294.1,177.2 294.2,179.3 291.6,183.2 C289,187.1 288.2,189.6 287.2,194.3 C286.2,199 285.7,199.8 287.2,203.2 C288.7,206.6 289.9,207.9 293.8,208.7 C297.7,209.5 299.4,208.8 303.8,206.5 C308.2,204.2 309.8,203.2 312.6,198.8 C315.4,194.4 316.8,190.8 316,187.7 C315.2,184.6 313.5,187.8 309.3,185.5 C305.1,183.2 302.3,178.2 298.2,177.7Z" fill="url(#gOrD)" />
<path d="M287.2,197.5 C288.7,198.1 292.9,200.8 296,201 C299.1,201.2 303.1,200.2 306,199 C308.9,197.8 312.2,194.8 313.5,194" fill="none" stroke="#9c3f07" stroke-width="1.2"/>
<path d="M286,207 C288,204.9 291.3,209.7 294,209.5 C296.7,209.3 300.5,204.9 302,206 C303.5,207.1 303.3,212.3 303,216 C302.7,219.7 301.2,224.7 300,228 C298.8,231.3 298,235.2 296,236 C294,236.8 290.3,235.3 288,233 C285.7,230.7 282.3,226.3 282,222 C281.7,217.7 284,209.1 286,207Z" fill="#121212" />
</g>
<g stroke="#7c7c7c" stroke-width="0.6" fill="none"><path d="M32.7,380.6 L42.1,380.6 L42.1,368.7"/></g>
<g font-family="Liberation Sans, sans-serif" font-size="4.6" fill="#6e6e6e"><text x="43.6" y="367.8">z</text><text x="44.4" y="381">x</text><text x="30.2" y="381.3">y</text></g>
</g></svg>
<svg width="800" height="429" viewBox="0 0 800 429">
<defs>
<radialGradient id="sphG" cx="0.35" cy="0.3" r="0.7"><stop offset="0" stop-color="#f4f4f4"/><stop offset="0.5" stop-color="#8e8e8e"/><stop offset="1" stop-color="#3c3c3c"/></radialGradient>
<radialGradient id="sphB" cx="0.35" cy="0.3" r="0.7"><stop offset="0" stop-color="#cfe0ff"/><stop offset="0.4" stop-color="#2f5fd0"/><stop offset="1" stop-color="#0a1c66"/></radialGradient>
<radialGradient id="sphH" cx="0.35" cy="0.3" r="0.7"><stop offset="0" stop-color="#bcd0ff"/><stop offset="0.5" stop-color="#3b62c8"/><stop offset="1" stop-color="#1a2f88"/></radialGradient>
</defs>
<path d="M2.3,7.8 q0.8,-2.7 2.7,-3.1 l0.8,-1.6 l0.4,1.6 q2,0.4 2,2.3 l-1.2,1.2 l-2.4,0 l-0.8,-1.2 Z" fill="#e8e8e8"/>
<path d="M784.2,3.2 l5,5.2 M789.2,3.2 l-5,5.2" stroke="#444" stroke-width="0.7" fill="none"/>
<circle cx="792.5" cy="39" r="2.3" fill="none" stroke="#9a9fa8" stroke-width="0.9"/>
<circle cx="796.3" cy="68" r="2.3" fill="none" stroke="#9a9fa8" stroke-width="0.9"/>
<path d="M794.3,26.6 l2.4,0 l-1.2,-1.7 Z M794.3,29.2 l2.4,0 l-1.2,1.7 Z" fill="#333"/>
<path d="M5.5,46 l4.5,0 l2,2 l0,6.3 l-6.5,0 Z" fill="#fdfdfd" stroke="#777" stroke-width="0.6"/>
<path d="M16.5,47.5 l3,0 l0.8,1 l3.8,0 l0,5.3 l-7.6,0 Z" fill="#d9a520"/><path d="M16.5,53.8 l1.8,-4 l7,0 l-1.8,4 Z" fill="#f6d25a" stroke="#a87a10" stroke-width="0.4"/>
<rect x="27.8" y="46.2" width="7.8" height="7.8" rx="0.6" fill="#8a6a2a"/><rect x="29.3" y="46.8" width="4.8" height="3" fill="#d9c58a"/><rect x="29.6" y="51.2" width="4.2" height="2.8" fill="#4a3a1c"/>
<path d="M35.2,55.6 l1.6,0 l0,-1.6 Z" fill="#444"/>
<rect x="40" y="48.8" width="8.2" height="4.6" rx="0.8" fill="#4a4a4a"/><rect x="41.6" y="46.2" width="5" height="3" fill="#e8e8e8" stroke="#666" stroke-width="0.4"/><rect x="41.4" y="52" width="5.4" height="2.2" fill="#bdbdbd"/>
<path d="M52.5,46.6 l4,0 l1.8,1.8 l0,5.8 l-5.8,0 Z" fill="#fafafa" stroke="#666" stroke-width="0.6"/><rect x="57" y="45.6" width="2.4" height="2.4" fill="#333"/>
<path d="M64.8,47 l4.8,6.4 M69.6,47 l-4.8,6.4" stroke="#666" stroke-width="0.8" fill="none"/>
<rect x="75.8" y="46.2" width="4" height="5.4" fill="#fafafa" stroke="#666" stroke-width="0.5"/><rect x="77.8" y="48.4" width="4" height="5.6" fill="#fafafa" stroke="#555" stroke-width="0.5"/>
<rect x="87.4" y="46.8" width="6.6" height="7.4" rx="0.7" fill="#e8cf5a" stroke="#8a7420" stroke-width="0.6"/><rect x="89.2" y="46" width="3" height="1.6" fill="#777"/>
<path d="M99,51 q3,-4 7,0" stroke="#333" stroke-width="1.2" fill="none"/><path d="M98.2,49 l0.4,3.2 l3,-1 Z" fill="#333"/>
<path d="M105.5,55.6 l1.6,0 l0,-1.6 Z" fill="#444"/>
<path d="M111,50 l0,-2.5 l1,-0.6 l0.7,2 l0.3,-2.8 l1,0 l0.3,2.8 l0.6,-2.4 l1,0.3 l-0.2,2.6 l0.9,-1.2 l0.7,0.6 l-1.3,3 l-1,2.2 l-3,0 Z" fill="#f2f2f2" stroke="#555" stroke-width="0.5"/>
<path d="M126.4,48 l0,4.8 M124,50.4 l4.8,0" stroke="#444" stroke-width="0.7"/><circle cx="126.4" cy="50.4" r="0.9" fill="none" stroke="#444" stroke-width="0.4"/>
<circle cx="138.3" cy="49.2" r="2.5" fill="#eef2fa" stroke="#444" stroke-width="0.7"/><path d="M136.5,51.1 l-2.4,2.6" stroke="#444" stroke-width="1"/>
<path d="M141.5,55.6 l1.6,0 l0,-1.6 Z" fill="#444"/>
<circle cx="149" cy="49.2" r="2.5" fill="#eef2fa" stroke="#444" stroke-width="0.7"/><path d="M147.2,51.1 l-2.4,2.6" stroke="#444" stroke-width="1"/>
<rect x="147.3" y="46" width="5" height="5" fill="none" stroke="#666" stroke-width="0.4" stroke-dasharray="0.8 0.6"/>
<path d="M152.5,55.6 l1.6,0 l0,-1.6 Z" fill="#444"/>
<circle cx="160.6" cy="50.2" r="2.4" fill="#eef2fa" stroke="#444" stroke-width="0.6"/><path d="M156.5,47.8 l0,-1.6 l1.6,0 M163,46.2 l1.6,0 l0,1.6 M164.6,52.6 l0,1.6 l-1.6,0 M158.1,54.2 l-1.6,0 l0,-1.6" stroke="#222" stroke-width="0.7" fill="none"/>
<path d="M164.8,55.8 l1.6,0 l0,-1.6 Z" fill="#444"/>
<circle cx="173.7" cy="49.2" r="2.5" fill="#f5e06a" stroke="#444" stroke-width="0.7"/><path d="M171.89999999999998,51.1 l-2.4,2.6" stroke="#444" stroke-width="1"/>
<path d="M177,55.6 l1.6,0 l0,-1.6 Z" fill="#444"/>
<path d="M181,49.5 q3,-3.5 6,-0.5" stroke="#333" stroke-width="0.9" fill="none"/><path d="M180.2,47.6 l0.3,2.8 l2.6,-0.9 Z" fill="#333"/>
<circle cx="185.4" cy="51.6" r="1.7" fill="#eef2fa" stroke="#444" stroke-width="0.5"/>
<path d="M188,55.6 l1.6,0 l0,-1.6 Z" fill="#444"/>
<rect x="190.8" y="46.2" width="8.6" height="7.8" fill="#f4f4f4" stroke="#5a2a2a" stroke-width="0.8"/><path d="M195.1,46.2 l0,7.8 M190.8,50.1 l8.6,0" stroke="#5a2a2a" stroke-width="0.8"/>
<path d="M199.2,55.8 l1.6,0 l0,-1.6 Z" fill="#444"/>
<path d="M203,51.8 l1.6,-0.4 l1.4,-1.8 l3,0 l1.4,1.6 l1.4,0.6 l0,1.2 l-8.8,0 Z" fill="#c62828"/><rect x="203" y="52.8" width="8.8" height="0.7" fill="#444"/>
<path d="M212,55.8 l1.6,0 l0,-1.6 Z" fill="#444"/>
<circle cx="219" cy="50.8" r="1.3" fill="#9a9a9a"/><path d="M216.5,50.8 l5,0 M219,48.4 l0,4.8" stroke="#aaa" stroke-width="0.4"/>
<path d="M222.5,55.8 l1.6,0 l0,-1.6 Z" fill="#444"/>
<circle cx="231.2" cy="50.2" r="3.3" fill="#f4f4f4" stroke="#999" stroke-width="0.6"/><path d="M231.2,50.2 l2,0" stroke="#888" stroke-width="0.5"/>
<path d="M235,55.8 l1.6,0 l0,-1.6 Z" fill="#444"/>
<path d="M239.5,48 l2.5,1.5 l2.8,-2 l1.2,1.2 l-2.6,2 l1.5,2.5 l-2.5,-1 l-2,1.6 Z" fill="#e8c030" stroke="#9a7a10" stroke-width="0.3"/>
<path d="M246,55.8 l1.6,0 l0,-1.6 Z" fill="#444"/>
<path d="M254,46 q3,0 3,3 q0,1.5 -1.5,2.7 l0,1.8 l-3,0 l0,-1.8 q-1.5,-1.2 -1.5,-2.7 q0,-3 3,-3 Z" fill="#f1f1e6" stroke="#777" stroke-width="0.5"/>
<path d="M257,55.8 l1.6,0 l0,-1.6 Z" fill="#444"/>
<rect x="262.6" y="49.8" width="5" height="4.2" fill="#e8e8e8" stroke="#444" stroke-width="0.6"/><path d="M263.6,49.8 l0,-1.6 q1.5,-2 3,0 l0,1.6" fill="none" stroke="#444" stroke-width="0.7"/>
<path d="M268.5,55.8 l1.6,0 l0,-1.6 Z" fill="#444"/>
<path d="M273,47.2 l8,0.8 l-1.5,5.5 l-4.5,0.5 Z" fill="#d43c2c"/><path d="M273,47.2 l4,3 l4,-2.2" stroke="#fff" stroke-width="0.6" fill="none"/>
<path d="M281,55.8 l1.6,0 l0,-1.6 Z" fill="#444"/>
<circle cx="289" cy="50.2" r="3.2" fill="none" stroke="#2a9a3a" stroke-width="1.6"/><path d="M289,47 a3.2,3.2 0 0 1 3.2,3.2" stroke="#d43030" stroke-width="1.6" fill="none"/><path d="M285.8,50.2 a3.2,3.2 0 0 1 3.2,-3.2" stroke="#3050d0" stroke-width="1.6" fill="none"/><path d="M292.2,50.2 a3.2,3.2 0 0 1 -3.2,3.2" stroke="#e8c020" stroke-width="1.6" fill="none"/>
<circle cx="300.5" cy="50.2" r="3.6" fill="url(#sphG)"/>
<circle cx="312" cy="50.2" r="3.8" fill="url(#sphG)"/>
<path d="M316,55.8 l1.6,0 l0,-1.6 Z" fill="#444"/>
<circle cx="324" cy="50.2" r="3.8" fill="url(#sphB)"/>
<path d="M328,55.8 l1.6,0 l0,-1.6 Z" fill="#444"/>
<path d="M335,46.6 l5,1.2 l-2,1.4 l1,3.6 l-1.5,0.3 l-1,-3.4 Z" fill="#e8c040" stroke="#8a6a10" stroke-width="0.3"/>
<circle cx="347" cy="50.3" r="2.6" fill="none" stroke="#8a6a1a" stroke-width="2"/><circle cx="347" cy="50.3" r="3.8" fill="none" stroke="#c9a030" stroke-width="0.9" stroke-dasharray="1.2 1"/>
<path d="M351,55.8 l1.6,0 l0,-1.6 Z" fill="#444"/>
<path d="M355.5,47 l3,0 l0,3.2 l3.6,0 l0,3.3" fill="none" stroke="#222" stroke-width="0.8"/><rect x="354.8" y="46.2" width="1.5" height="1.5" fill="#222"/><rect x="361.3" y="52.8" width="1.5" height="1.5" fill="#222"/>
<path d="M363.5,55.8 l1.6,0 l0,-1.6 Z" fill="#444"/>
<circle cx="370" cy="50.2" r="3.9" fill="url(#sphH)"/>
<text x="368.5" y="52.3" font-family="Liberation Sans, sans-serif" font-size="5.8" font-weight="bold" fill="#ffffff">?</text>
<path d="M4.2,64.8 l0,6.5 l1.6,-1.5 l1.2,2.4 l1,-0.5 l-1.2,-2.3 l2.1,-0.2 Z" fill="#fff" stroke="#333" stroke-width="0.5"/>
<circle cx="17.6" cy="67.3" r="0.7" fill="#777"/>
<path d="M20.8,73.5 l1.5,0 l0,-1.5 Z" fill="#555"/>
<path d="M2.7,82.89999999999999 l2.5,-6 l4,5" fill="none" stroke="#333" stroke-width="0.6"/>
<path d="M9.4,85.1 l1.5,0 l0,-1.5 Z" fill="#555"/>
<path d="M14.600000000000001,78.89999999999999 l2.5,-2 l3,1.5 l-2,4 l-3,-1.5" fill="none" stroke="#333" stroke-width="0.6"/>
<path d="M20.8,85.1 l1.5,0 l0,-1.5 Z" fill="#555"/>
<rect x="14.0" y="78.3" width="1.2" height="1.2" fill="#222"/>
<rect x="16.5" y="76.3" width="1.2" height="1.2" fill="#222"/>
<rect x="19.5" y="77.8" width="1.2" height="1.2" fill="#222"/>
<rect x="17.5" y="81.8" width="1.2" height="1.2" fill="#222"/>
<rect x="14.5" y="80.3" width="1.2" height="1.2" fill="#222"/>
<circle cx="6.2" cy="91.5" r="3.5" fill="none" stroke="#333" stroke-width="0.6"/><path d="M6.2,91.5 l2.4,-2.4" stroke="#333" stroke-width="0.5"/>
<path d="M9.4,96.7 l1.5,0 l0,-1.5 Z" fill="#555"/>
<ellipse cx="17.6" cy="91.5" rx="3.8" ry="2.8" fill="none" stroke="#333" stroke-width="0.6"/><circle cx="17.6" cy="91.5" r="0.6" fill="#222"/>
<path d="M20.8,96.7 l1.5,0 l0,-1.5 Z" fill="#555"/>
<path d="M3.2,99.6 q7,2 3.5,4.5 l-3.5,2.5 Z" fill="none" stroke="#333" stroke-width="0.6"/>
<path d="M9.4,108.3 l1.5,0 l0,-1.5 Z" fill="#555"/>
<rect x="13.8" y="100.5" width="7.6" height="5.2" fill="none" stroke="#333" stroke-width="0.6"/>
<path d="M20.8,108.3 l1.5,0 l0,-1.5 Z" fill="#555"/>
<circle cx="6.2" cy="114.69999999999999" r="3.4" fill="none" stroke="#333" stroke-width="0.6"/><circle cx="6.2" cy="114.69999999999999" r="1" fill="none" stroke="#333" stroke-width="0.5"/>
<path d="M9.4,119.9 l1.5,0 l0,-1.5 Z" fill="#555"/>
<path d="M14.100000000000001,111.69999999999999 q5,-0.5 5,3 q0,3 2.5,3.5" fill="none" stroke="#222" stroke-width="1.2"/>
<path d="M20.8,119.9 l1.5,0 l0,-1.5 Z" fill="#555"/>
<path d="M2.7,122.8 q3.5,2.5 7,0 q-2.5,3.5 0,7 q-3.5,-2.5 -7,0 q2.5,-3.5 0,-7 Z" fill="#44569f" stroke="#1a2a6a" stroke-width="0.4"/>
<path d="M9.4,131.5 l1.5,0 l0,-1.5 Z" fill="#555"/>
<path d="M14.100000000000001,127.3 q1,-4.5 5,-4 q3,1 2,5.5 l-2.5,0.5 q0,-3 -2,-3 Z" fill="#8294cc" stroke="#1a2a6a" stroke-width="0.4"/>
<path d="M20.8,131.5 l1.5,0 l0,-1.5 Z" fill="#555"/>
<path d="M2.4000000000000004,136.39999999999998 l2.5,-2 l5,0 l0,5 l-2.5,2.2 l-5,0 Z" fill="#44569f"/><path d="M2.4000000000000004,136.39999999999998 l5,0 l2.5,-2 M7.4,136.39999999999998 l0,5.2" stroke="#c8d4ff" stroke-width="0.4" fill="none"/>
<path d="M9.4,143.1 l1.5,0 l0,-1.5 Z" fill="#555"/>
<circle cx="16.1" cy="138.89999999999998" r="2.8" fill="#44569f"/><circle cx="19.1" cy="136.7" r="2.8" fill="#5068b8"/>
<path d="M20.8,143.1 l1.5,0 l0,-1.5 Z" fill="#555"/>
<path d="M2.4000000000000004,148.5 q3.8,-2.5 7.6,0 l-1,4 q-2.8,-1.5 -5.6,0 Z" fill="#8294cc" stroke="#1a2a6a" stroke-width="0.4"/><rect x="5.5" y="145.5" width="1.4" height="1.4" fill="#222"/>
<path d="M9.4,154.7 l1.5,0 l0,-1.5 Z" fill="#555"/>
<path d="M14.100000000000001,151.5 l3,-5 l4.5,1.5 l-3,5 Z" fill="#44569f" stroke="#c8d4ff" stroke-width="0.3"/>
<path d="M20.8,154.7 l1.5,0 l0,-1.5 Z" fill="#555"/>
<path d="M3.2,158.1 l3,-0.5 l3,3 l-2,3.5 l-2.5,0.5 l-2.5,-3 Z" fill="#e8b830" stroke="#7a5a10" stroke-width="0.4"/>
<path d="M9.4,166.3 l1.5,0 l0,-1.5 Z" fill="#555"/>
<path d="M17.6,157.1 l1,3 l3,-1.5 l-1.5,3 l2,2.5 l-3.5,-0.5 l-1,2.5 l-1,-2.5 l-3,0.5 l2,-2.5 l-1.5,-3 l2.5,1.5 Z" fill="#f08a1a" stroke="#8a4a08" stroke-width="0.3"/>
<path d="M20.8,166.3 l1.5,0 l0,-1.5 Z" fill="#555"/>
<path d="M2.7,175.2 l7,0 M5.7,169.2 l0,5 l-2,0" stroke="#2a3a8a" stroke-width="0.9" fill="none"/>
<path d="M9.4,177.9 l1.5,0 l0,-1.5 Z" fill="#555"/>
<path d="M14.100000000000001,175.2 l7,0 M18.6,169.2 l-1,5" stroke="#2a3a8a" stroke-width="0.9" fill="none"/><rect x="16.6" y="171.7" width="3.5" height="2.2" fill="#44569f"/>
<path d="M20.8,177.9 l1.5,0 l0,-1.5 Z" fill="#555"/>
<path d="M3.2,186.8 l3,-6 l3,6 Z" fill="#222"/><circle cx="6.2" cy="185.3" r="1" fill="#fff"/>
<path d="M9.4,189.5 l1.5,0 l0,-1.5 Z" fill="#555"/>
<circle cx="16.1" cy="185.8" r="1.6" fill="none" stroke="#333" stroke-width="0.5"/><circle cx="19.1" cy="185.8" r="1.6" fill="#44569f"/><circle cx="17.6" cy="182.3" r="1.4" fill="none" stroke="#333" stroke-width="0.5"/>
<path d="M20.8,189.5 l1.5,0 l0,-1.5 Z" fill="#555"/>
<path d="M2.7,192.89999999999998 q6,0 6.5,6.5" fill="none" stroke="#333" stroke-width="0.7"/>
<path d="M9.4,201.1 l1.5,0 l0,-1.5 Z" fill="#555"/>
<path d="M14.600000000000001,193.39999999999998 q4,-1 3.5,2.5 q0,2.5 2.5,3" fill="none" stroke="#555" stroke-width="0.6"/><rect x="14.000000000000002" y="192.79999999999998" width="1.2" height="1.2" fill="#333"/><rect x="20.0" y="198.29999999999998" width="1.2" height="1.2" fill="#333"/>
<path d="M20.8,201.1 l1.5,0 l0,-1.5 Z" fill="#555"/>
<path d="M2.7,204.0 l7,0 l0,2.2 l-2.2,0 l0,5 l-2.6,0 l0,-5 l-2.2,0 Z" fill="#44569f" stroke="#1a2a6a" stroke-width="0.3"/>
<path d="M9.4,212.7 l1.5,0 l0,-1.5 Z" fill="#555"/>
<path d="M15.100000000000001,210.0 l5,-5" stroke="#555" stroke-width="0.5"/><rect x="14.000000000000002" y="208.9" width="2.2" height="2.2" fill="none" stroke="#333" stroke-width="0.5"/><rect x="19.200000000000003" y="203.9" width="2" height="2" fill="none" stroke="#333" stroke-width="0.5"/>
<path d="M20.8,212.7 l1.5,0 l0,-1.5 Z" fill="#555"/>
<rect x="2.6" y="215.69999999999996" width="2.6" height="2.6" fill="none" stroke="#2a3a8a" stroke-width="0.7"/><rect x="2.6" y="219.89999999999998" width="2.6" height="2.6" fill="none" stroke="#2a3a8a" stroke-width="0.7"/><rect x="7.0" y="217.59999999999997" width="2.8" height="3.2" fill="#44569f"/>
<path d="M9.4,224.3 l1.5,0 l0,-1.5 Z" fill="#555"/>
<path d="M14.100000000000001,216.09999999999997 l0,6 l2.2,0 l0,-6 Z M17.1,216.09999999999997 l4,2.5 l-4,3.5 Z" fill="none" stroke="#2a3a8a" stroke-width="0.7"/>
<path d="M20.8,224.3 l1.5,0 l0,-1.5 Z" fill="#555"/>
<path d="M2.4000000000000004,228.7 l2,-1.8 l5.6,0 l0,5.5 l-2,1.8 l-5.6,0 Z" fill="#5068b8" stroke="#1a2a6a" stroke-width="0.4"/><rect x="3.6" y="230.2" width="3.4" height="2.8" fill="#dfe6ff"/>
<path d="M9.4,235.9 l1.5,0 l0,-1.5 Z" fill="#555"/>
<path d="M13.8,233.2 l7.6,0" stroke="#2a3a8a" stroke-width="0.8"/><path d="M13.8,230.2 l7.6,0" stroke="#2a3a8a" stroke-width="0.5" stroke-dasharray="1 0.8"/><rect x="15.600000000000001" y="227.2" width="4" height="2.2" fill="#fff" stroke="#99a" stroke-width="0.3"/>
<path d="M20.8,235.9 l1.5,0 l0,-1.5 Z" fill="#555"/>
<path d="M2.7,238.8 l7,0 l0,7 l-7,0 Z M5.0,238.8 l0,7 M7.4,238.8 l0,7 M2.7,241.10000000000002 l7,0 M2.7,243.5 l7,0" fill="none" stroke="#334" stroke-width="0.6"/>
<path d="M9.4,247.5 l1.5,0 l0,-1.5 Z" fill="#555"/>
<path d="M15.600000000000001,238.8 l4,0 l-1.3,3.5 l1.3,3.5 l-4,0 l1.3,-3.5 Z" fill="#c8784a" stroke="#6a3a1a" stroke-width="0.4"/>
<path d="M20.8,247.5 l1.5,0 l0,-1.5 Z" fill="#555"/>
<path d="M3.2,250.89999999999998 l2.5,-0.8 l1,6.5 l-2.5,0.8 Z M6.7,250.39999999999998 l2.5,0.5 l-1.5,6.2 l-2,-0.5 Z" fill="#6078c0" stroke="#1a2a6a" stroke-width="0.4"/>
<path d="M9.4,259.1 l1.5,0 l0,-1.5 Z" fill="#555"/>
<path d="M14.600000000000001,254.39999999999998 l2,2.5 l4.5,-6" fill="none" stroke="#111" stroke-width="1.1"/>
<path d="M20.8,259.1 l1.5,0 l0,-1.5 Z" fill="#555"/>
<ellipse cx="5.2" cy="265.5" rx="2.6" ry="2.2" fill="#e8e8e8" stroke="#333" stroke-width="0.5"/><ellipse cx="7.7" cy="266.5" rx="2.4" ry="2" fill="#d8d8d8" stroke="#333" stroke-width="0.5"/>
<path d="M9.4,270.7 l1.5,0 l0,-1.5 Z" fill="#555"/>
<path d="M14.100000000000001,268.5 l2.5,-4.5 l3,-0.5 l2,5 Z" fill="#e8c95a" stroke="#7a6a2a" stroke-width="0.4"/><circle cx="18.6" cy="262.5" r="1" fill="none" stroke="#555" stroke-width="0.4"/>
<path d="M20.8,270.7 l1.5,0 l0,-1.5 Z" fill="#555"/>
<circle cx="724.6" cy="67.2" r="2.4" fill="none" stroke="#2a9a3a" stroke-width="1.3"/><path d="M724.6,64.8 a2.4,2.4 0 0 1 2.4,2.4" stroke="#d43030" stroke-width="1.3" fill="none"/><path d="M722.2,67.2 a2.4,2.4 0 0 1 2.4,-2.4" stroke="#3050d0" stroke-width="1.3" fill="none"/>
<path d="M739,64.5 l6.4,0.8 l-1.3,4.6 l-3.6,0.4 Z" fill="#d43c2c"/><path d="M739,64.5 l3.2,2.4 l3.2,-1.6" stroke="#fff" stroke-width="0.5" fill="none"/>
<rect x="757.2" y="64.2" width="5.6" height="4.4" rx="0.5" fill="#dfe6f2" stroke="#2a2a2a" stroke-width="0.8"/><rect x="758.7" y="69.2" width="2.6" height="0.9" fill="#2a2a2a"/>
<rect x="775" y="64" width="5.6" height="6" fill="#5068b8"/><path d="M776,65.5 l3.6,0 M776,67 l3.6,0 M776,68.5 l3.6,0" stroke="#e8eeff" stroke-width="0.5"/>
<path d="M791.3,117.6 l1.7,1.7 l1.7,-1.7" fill="none" stroke="#444" stroke-width="0.6"/>
<path d="M762.2,252.9 l1.6,1.8 l3,-3.8" fill="none" stroke="#222" stroke-width="0.7"/>
<path d="M762.2,262.1 l1.6,1.8 l3,-3.8" fill="none" stroke="#222" stroke-width="0.7"/>
<path d="M790.8,244.8 l0.7,0 M792.4,244.8 l0.7,0 M794,244.8 l0.7,0" stroke="#444" stroke-width="0.7"/>
<path d="M5.4,413.3 l1.7,2.1 l3.2,-4.2" fill="none" stroke="#222" stroke-width="0.7"/>
<path d="M28.3,413.3 l1.7,2.1 l3.2,-4.2" fill="none" stroke="#222" stroke-width="0.7"/>
<path d="M52.8,413.3 l1.7,2.1 l3.2,-4.2" fill="none" stroke="#222" stroke-width="0.7"/>
<path d="M77.3,413.3 l1.7,2.1 l3.2,-4.2" fill="none" stroke="#222" stroke-width="0.7"/>
<path d="M98.8,413.3 l1.7,2.1 l3.2,-4.2" fill="none" stroke="#222" stroke-width="0.7"/>
<path d="M120.3,413.3 l1.7,2.1 l3.2,-4.2" fill="none" stroke="#222" stroke-width="0.7"/>
<path d="M137.8,413.3 l1.7,2.1 l3.2,-4.2" fill="none" stroke="#222" stroke-width="0.7"/>
<path d="M162.3,413.3 l1.7,2.1 l3.2,-4.2" fill="none" stroke="#222" stroke-width="0.7"/>
<path d="M184.3,413.3 l1.7,2.1 l3.2,-4.2" fill="none" stroke="#222" stroke-width="0.7"/>
<path d="M210.3,413.3 l1.7,2.1 l3.2,-4.2" fill="none" stroke="#222" stroke-width="0.7"/>
<path d="M233.3,413.3 l1.7,2.1 l3.2,-4.2" fill="none" stroke="#222" stroke-width="0.7"/>
</svg>
<span class="t" style="left:11.2px;top:3.70px;font-size:6.6px;color:#3a3a3a;transform:scaleX(0.9312);">3DM.3dm (129777 KB) - Rhinoceros (Educational) (64-bit) - [Perspective]</span>
<span class="t" style="left:3px;top:14.70px;font-size:6.6px;color:#383838;transform:scaleX(0.9412);">File</span>
<span class="t" style="left:18.5px;top:14.70px;font-size:6.6px;color:#383838;transform:scaleX(1.0110);">Edit</span>
<span class="t" style="left:34.5px;top:14.70px;font-size:6.6px;color:#383838;transform:scaleX(0.9868);">View</span>
<span class="t" style="left:53.5px;top:14.70px;font-size:6.6px;color:#383838;transform:scaleX(0.9947);">Curve</span>
<span class="t" style="left:75px;top:14.70px;font-size:6.6px;color:#383838;transform:scaleX(0.9457);">Surface</span>
<span class="t" style="left:101.5px;top:14.70px;font-size:6.6px;color:#383838;transform:scaleX(0.9883);">Solid</span>
<span class="t" style="left:121.5px;top:14.70px;font-size:6.6px;color:#383838;transform:scaleX(0.9302);">Mesh</span>
<span class="t" style="left:142px;top:14.70px;font-size:6.6px;color:#383838;transform:scaleX(0.9629);">Dimension</span>
<span class="t" style="left:177px;top:14.70px;font-size:6.6px;color:#383838;transform:scaleX(0.9560);">Transform</span>
<span class="t" style="left:211px;top:14.70px;font-size:6.6px;color:#383838;transform:scaleX(0.9736);">Tools</span>
<span class="t" style="left:231px;top:14.70px;font-size:6.6px;color:#383838;transform:scaleX(0.9587);">Analyze</span>
<span class="t" style="left:258.5px;top:14.70px;font-size:6.6px;color:#383838;transform:scaleX(0.9473);">Render</span>
<span class="t" style="left:284px;top:14.70px;font-size:6.6px;color:#383838;transform:scaleX(0.8923);">Panels</span>
<span class="t" style="left:307px;top:14.70px;font-size:6.6px;color:#383838;transform:scaleX(0.9585);">Help</span>
<span class="t" style="left:3.5px;top:24.75px;font-size:6.5px;color:#222;font-weight:bold;transform:scaleX(0.9434);">Click and drag to rotate</span>
<span class="t" style="left:73px;top:24.75px;font-size:6.5px;color:#3a3a3a;transform:scaleX(0.9646);">( Down  Left  Right  Up ):</span>
<span class="t" style="left:8px;top:36.90px;font-size:6.2px;color:#33373f;transform:scaleX(0.8955);">Standard</span>
<span class="t" style="left:41px;top:36.90px;font-size:6.2px;color:#33373f;transform:scaleX(0.8764);">CPlanes</span>
<span class="t" style="left:71px;top:36.90px;font-size:6.2px;color:#33373f;transform:scaleX(0.9049);">Set View</span>
<span class="t" style="left:102.5px;top:36.90px;font-size:6.2px;color:#33373f;transform:scaleX(0.9361);">Display</span>
<span class="t" style="left:131px;top:36.90px;font-size:6.2px;color:#33373f;transform:scaleX(0.9301);">Select</span>
<span class="t" style="left:157px;top:36.90px;font-size:6.2px;color:#33373f;transform:scaleX(0.8697);">Viewport Layout</span>
<span class="t" style="left:206px;top:36.90px;font-size:6.2px;color:#33373f;transform:scaleX(0.9438);">Visibility</span>
<span class="t" style="left:236px;top:36.90px;font-size:6.2px;color:#33373f;transform:scaleX(0.8760);">Transform</span>
<span class="t" style="left:271px;top:36.90px;font-size:6.2px;color:#33373f;transform:scaleX(0.8906);">Curve Tools</span>
<span class="t" style="left:311.5px;top:36.90px;font-size:6.2px;color:#33373f;transform:scaleX(0.8963);">Surface Tools</span>
<span class="t" style="left:356.5px;top:36.90px;font-size:6.2px;color:#33373f;transform:scaleX(0.8889);">Solid Tools</span>
<span class="t" style="left:394px;top:36.90px;font-size:6.2px;color:#33373f;transform:scaleX(0.8978);">Mesh Tools</span>
<span class="t" style="left:433.5px;top:36.90px;font-size:6.2px;color:#33373f;transform:scaleX(0.8939);">Render Tools</span>
<span class="t" style="left:476.5px;top:36.90px;font-size:6.2px;color:#33373f;transform:scaleX(0.8998);">Drafting</span>
<span class="t" style="left:505.5px;top:36.90px;font-size:6.2px;color:#33373f;transform:scaleX(0.8687);">New in V5</span>
<span class="t" style="left:30.9px;top:61.70px;font-size:6.6px;color:#2a4466;transform:scaleX(0.8766);">Perspective</span>
<span class="t" style="left:32px;top:397.65px;font-size:6.7px;color:#3a3a3a;transform:scaleX(0.8583);">Perspective</span>
<span class="t" style="left:73px;top:397.65px;font-size:6.7px;color:#3a3a3a;transform:scaleX(0.8969);">Front</span>
<span class="t" style="left:97px;top:397.65px;font-size:6.7px;color:#3a3a3a;transform:scaleX(0.8969);">Front</span>
<span class="t" style="left:120.5px;top:397.65px;font-size:6.7px;color:#3a3a3a;transform:scaleX(0.9739);">Top</span>
<span class="t" style="left:142px;top:398.50px;font-size:6px;color:#8a8f9a;transform:scaleX(1.1378);">+</span>
<span class="t" style="left:14px;top:410.80px;font-size:6.4px;color:#333;transform:scaleX(0.8352);">End</span>
<span class="t" style="left:36.5px;top:410.80px;font-size:6.4px;color:#333;transform:scaleX(0.8298);">Near</span>
<span class="t" style="left:61px;top:410.80px;font-size:6.4px;color:#333;transform:scaleX(0.8574);">Point</span>
<span class="t" style="left:85.5px;top:410.80px;font-size:6.4px;color:#333;transform:scaleX(0.8727);">Mid</span>
<span class="t" style="left:107px;top:410.80px;font-size:6.4px;color:#333;transform:scaleX(0.8096);">Cen</span>
<span class="t" style="left:128.5px;top:410.80px;font-size:6.4px;color:#333;transform:scaleX(0.7736);">Int</span>
<span class="t" style="left:146px;top:410.80px;font-size:6.4px;color:#333;transform:scaleX(0.8889);">Perp</span>
<span class="t" style="left:170.5px;top:410.80px;font-size:6.4px;color:#333;transform:scaleX(0.9212);">Tan</span>
<span class="t" style="left:192.5px;top:410.80px;font-size:6.4px;color:#333;transform:scaleX(0.8631);">Quad</span>
<span class="t" style="left:218.5px;top:410.80px;font-size:6.4px;color:#333;transform:scaleX(0.8361);">Knot</span>
<span class="t" style="left:241.5px;top:410.80px;font-size:6.4px;color:#333;transform:scaleX(0.8552);">Vertex</span>
<span class="t" style="left:269px;top:410.80px;font-size:6.4px;color:#4a4a4a;transform:scaleX(0.9049);">Project</span>
<span class="t" style="left:299px;top:410.80px;font-size:6.4px;color:#4a4a4a;transform:scaleX(0.8674);">Disable</span>
<span class="t" style="left:4.5px;top:421.75px;font-size:6.5px;color:#333;transform:scaleX(0.8908);">CPlane</span>
<span class="t" style="left:33px;top:421.75px;font-size:6.5px;color:#333;transform:scaleX(0.9115);">x -703.593</span>
<span class="t" style="left:70px;top:421.75px;font-size:6.5px;color:#333;transform:scaleX(0.9103);">y 314.781</span>
<span class="t" style="left:105px;top:421.75px;font-size:6.5px;color:#333;transform:scaleX(0.9480);">z 2154.902</span>
<span class="t" style="left:142px;top:421.75px;font-size:6.5px;color:#333;transform:scaleX(0.9336);">Millimeters</span>
<span class="t" style="left:184.5px;top:421.75px;font-size:6.5px;color:#333;transform:scaleX(0.8894);">Layer 01</span>
<span class="t" style="left:251.5px;top:421.80px;font-size:6.4px;color:#1a1a1a;font-weight:bold;transform:scaleX(0.9821);">Grid Snap</span>
<span class="t" style="left:289.5px;top:421.80px;font-size:6.4px;color:#1a1a1a;font-weight:bold;transform:scaleX(0.9192);">Ortho</span>
<span class="t" style="left:314px;top:421.80px;font-size:6.4px;color:#444;transform:scaleX(0.9197);">Planar</span>
<span class="t" style="left:340px;top:421.80px;font-size:6.4px;color:#1a1a1a;font-weight:bold;transform:scaleX(0.9301);">Osnap</span>
<span class="t" style="left:368px;top:421.80px;font-size:6.4px;color:#1a1a1a;font-weight:bold;transform:scaleX(0.9475);">SmartTrack</span>
<span class="t" style="left:411px;top:421.80px;font-size:6.4px;color:#444;transform:scaleX(0.9455);">Gumball</span>
<span class="t" style="left:445.5px;top:421.80px;font-size:6.4px;color:#444;transform:scaleX(0.9701);">Record History</span>
<span class="t" style="left:498.5px;top:421.80px;font-size:6.4px;color:#444;transform:scaleX(0.8449);">Filter</span>
<span class="t" style="left:516.5px;top:421.80px;font-size:6.4px;color:#333;transform:scaleX(0.9430);">Minutes from last save: 4</span>
<span class="t" style="left:729.3px;top:64.80px;font-size:6.4px;color:#333;transform:scaleX(0.7714);">P..</span>
<span class="t" style="left:746.9px;top:64.80px;font-size:6.4px;color:#333;transform:scaleX(0.7455);">L..</span>
<span class="t" style="left:764px;top:64.80px;font-size:6.4px;color:#333;transform:scaleX(0.6975);">D..</span>
<span class="t" style="left:781.7px;top:64.80px;font-size:6.4px;color:#333;transform:scaleX(0.8076);">H..</span>
<span class="t" style="left:722.8px;top:77.75px;font-size:6.5px;color:#333;transform:scaleX(0.8819);">Viewport</span>
<span class="t" style="left:726.7px;top:88.75px;font-size:6.5px;color:#333;transform:scaleX(1.0210);">Title</span>
<span class="t" style="left:760.8px;top:87.80px;font-size:6.4px;color:#333;transform:scaleX(0.9194);">Perspective</span>
<span class="t" style="left:726.7px;top:97.75px;font-size:6.5px;color:#9a9a9a;transform:scaleX(0.8902);">Width</span>
<span class="t" style="left:760.8px;top:97.80px;font-size:6.4px;color:#8d939f;transform:scaleX(0.9284);">1654</span>
<span class="t" style="left:726.7px;top:106.75px;font-size:6.5px;color:#9a9a9a;transform:scaleX(0.8938);">Height</span>
<span class="t" style="left:760.8px;top:106.80px;font-size:6.4px;color:#8d939f;transform:scaleX(0.9558);">805</span>
<span class="t" style="left:726.7px;top:115.75px;font-size:6.5px;color:#333;transform:scaleX(0.8579);">Projection</span>
<span class="t" style="left:760.8px;top:115.80px;font-size:6.4px;color:#333;transform:scaleX(0.9277);">Perspect..</span>
<span class="t" style="left:722.8px;top:125.75px;font-size:6.5px;color:#333;transform:scaleX(0.8995);">Camera</span>
<span class="t" style="left:726.7px;top:135.75px;font-size:6.5px;color:#333;transform:scaleX(0.8381);">Lens Length</span>
<span class="t" style="left:760.8px;top:135.80px;font-size:6.4px;color:#333;transform:scaleX(0.9395);">30.0</span>
<span class="t" style="left:726.7px;top:144.75px;font-size:6.5px;color:#333;transform:scaleX(0.8334);">X Location</span>
<span class="t" style="left:760.8px;top:144.80px;font-size:6.4px;color:#333;transform:scaleX(0.8195);">-8451.102</span>
<span class="t" style="left:726.7px;top:154.75px;font-size:6.5px;color:#333;transform:scaleX(0.8363);">Y Location</span>
<span class="t" style="left:760.8px;top:154.80px;font-size:6.4px;color:#333;transform:scaleX(0.8195);">-1262.528</span>
<span class="t" style="left:726.7px;top:163.75px;font-size:6.5px;color:#333;transform:scaleX(0.8432);">Z Location</span>
<span class="t" style="left:760.8px;top:163.80px;font-size:6.4px;color:#333;transform:scaleX(0.8530);">-36.607</span>
<span class="t" style="left:726.7px;top:172.75px;font-size:6.5px;color:#333;transform:scaleX(0.8666);">Location</span>
<span class="t" style="left:769px;top:172.75px;font-size:6.5px;color:#333;transform:scaleX(0.8023);">Place...</span>
<span class="t" style="left:722.8px;top:182.75px;font-size:6.5px;color:#333;transform:scaleX(0.9514);">Target</span>
<span class="t" style="left:726.7px;top:192.75px;font-size:6.5px;color:#333;transform:scaleX(0.8840);">X Target</span>
<span class="t" style="left:760.8px;top:192.80px;font-size:6.4px;color:#333;transform:scaleX(0.8178);">2374.564</span>
<span class="t" style="left:726.7px;top:201.75px;font-size:6.5px;color:#333;transform:scaleX(0.8881);">Y Target</span>
<span class="t" style="left:760.8px;top:201.80px;font-size:6.4px;color:#333;transform:scaleX(0.7411);">-501.718</span>
<span class="t" style="left:726.7px;top:211.75px;font-size:6.5px;color:#333;transform:scaleX(0.8974);">Z Target</span>
<span class="t" style="left:760.8px;top:211.80px;font-size:6.4px;color:#333;transform:scaleX(0.7562);">-70.691</span>
<span class="t" style="left:726.7px;top:220.75px;font-size:6.5px;color:#333;transform:scaleX(0.8666);">Location</span>
<span class="t" style="left:769px;top:220.75px;font-size:6.5px;color:#333;transform:scaleX(0.8023);">Place...</span>
<span class="t" style="left:722.8px;top:230.75px;font-size:6.5px;color:#333;transform:scaleX(0.9025);">Wallpaper</span>
<span class="t" style="left:726.7px;top:240.75px;font-size:6.5px;color:#333;transform:scaleX(0.8902);">Filename</span>
<span class="t" style="left:760.8px;top:240.80px;font-size:6.4px;color:#333;transform:scaleX(0.8494);">(none)</span>
<span class="t" style="left:726.7px;top:249.75px;font-size:6.5px;color:#333;transform:scaleX(0.8669);">Show</span>
<span class="t" style="left:726.7px;top:259.75px;font-size:6.5px;color:#333;transform:scaleX(0.9082);">Gray</span>
</body></html>
